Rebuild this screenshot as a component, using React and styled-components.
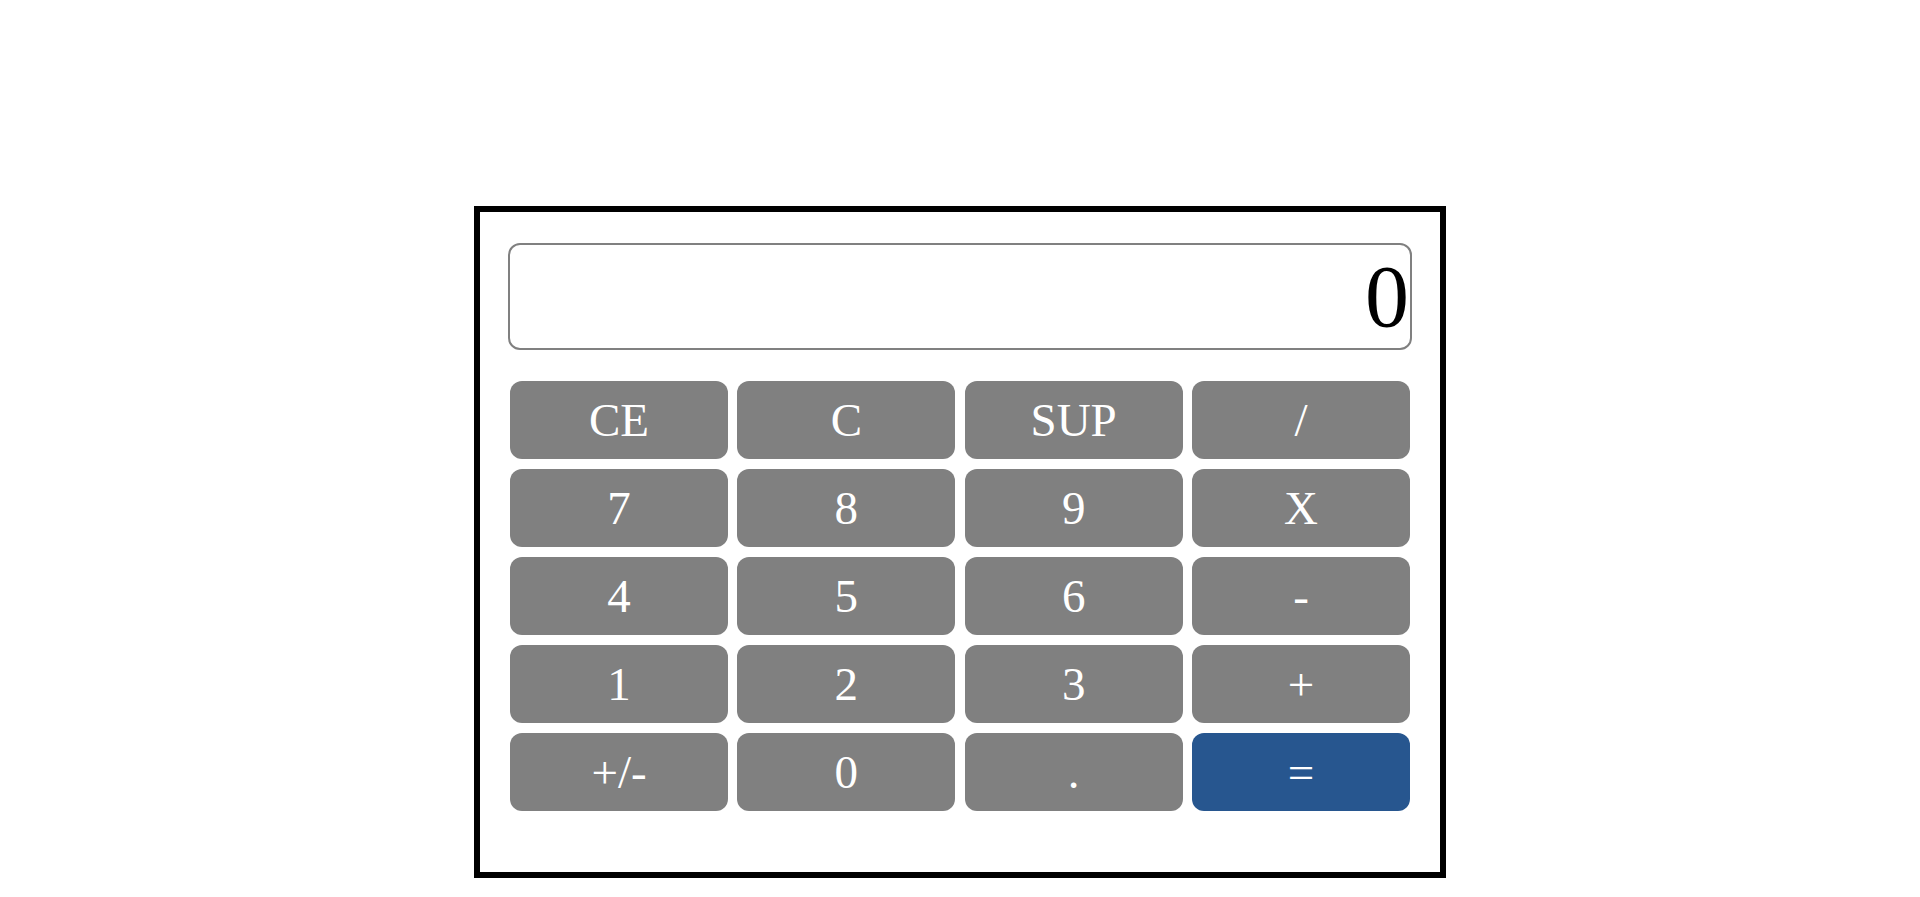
import React, { useState } from 'react';
import styled, { createGlobalStyle } from 'styled-components';

const GlobalStyle = createGlobalStyle`
  body {
    margin: 0;
    background-color: #fff;
    font-family: "Liberation Serif", "Times New Roman", serif;
  }
`;

const Page = styled.main`
  display: flex;
  justify-content: center;
  padding-top: 206px;
`;
const Calculator = styled.section`
  width: 972px;
  box-sizing: border-box;
  border: 6px solid #000;
  padding: 31px 28px 61px;
`;
const Screen = styled.div`
  height: 107px;
  box-sizing: border-box;
  border: 2px solid #808080;
  border-radius: 12px;
  display: flex;
  align-items: center;
  justify-content: flex-end;
  padding-right: 1px;
  font-size: 88px;
  line-height: 1;
  color: #000;
  overflow: hidden;
`;
const Keypad = styled.div`
  margin-top: 31px;
  padding: 0 2px;
  display: grid;
  grid-template-columns: repeat(4, 1fr);
  grid-auto-rows: 78px;
  gap: 10px 9.33px;
`;
const Key = styled.button`
  border: none;
  border-radius: 12px;
  background-color: ${props => (props.$primary ? '#27568f' : '#808080')};
  color: #fff;
  font-family: "Liberation Serif", "Times New Roman", serif;
  font-size: 47px;
  line-height: 1;
  padding: 0;
  cursor: pointer;
`;

const keys = [
  'CE', 'C', 'SUP', '/',
  '7', '8', '9', 'X',
  '4', '5', '6', '-',
  '1', '2', '3', '+',
  '+/-', '0', '.', '='
];

export default function App() {
  const [value] = useState('0');
  return (
    <>
      <GlobalStyle />
      <Page>
        <Calculator>
          <Screen>{value}</Screen>
          <Keypad>
            {keys.map(k => (
              <Key key={k} $primary={k === '='}>
                {k}
              </Key>
            ))}
          </Keypad>
        </Calculator>
      </Page>
    </>
  );
}
